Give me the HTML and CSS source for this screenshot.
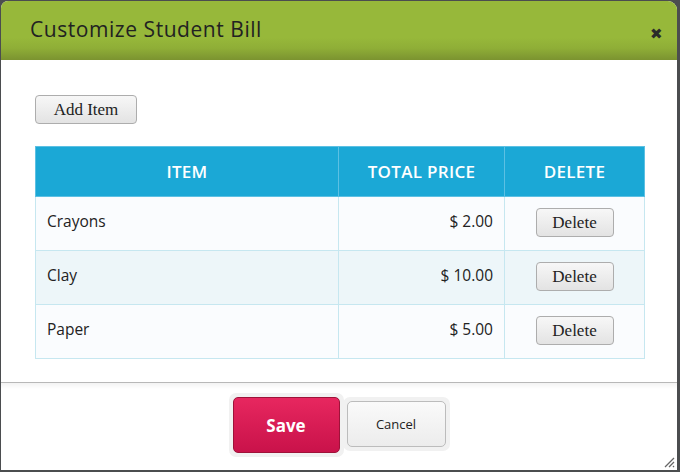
FILE: index.html
```html
<!DOCTYPE html>
<html>
<head>
<meta charset="utf-8">
<link rel="stylesheet" href="styles.css">
</head>
<body>
<div class="dialog">
  <div class="dlg-head">
    <h1 class="dlg-title">Customize Student Bill</h1>
    <span class="dlg-close">&#x2716;</span>
  </div>
  <div class="dlg-body">
    <button class="btn-legacy btn-add">Add Item</button>
    <table class="bill">
      <thead>
        <tr><th class="c-item">ITEM</th><th class="c-price">TOTAL PRICE</th><th class="c-del">DELETE</th></tr>
      </thead>
      <tbody>
        <tr class="odd"><td>Crayons</td><td class="num">$ 2.00</td><td class="del"><button class="btn-legacy btn-del">Delete</button></td></tr>
        <tr class="even"><td>Clay</td><td class="num">$ 10.00</td><td class="del"><button class="btn-legacy btn-del">Delete</button></td></tr>
        <tr class="odd"><td>Paper</td><td class="num">$ 5.00</td><td class="del"><button class="btn-legacy btn-del">Delete</button></td></tr>
      </tbody>
    </table>
  </div>
  <div class="dlg-foot">
    <span class="halo"><button class="btn-save">Save</button></span>
    <span class="halo"><button class="btn-cancel">Cancel</button></span>
  </div>
  <svg class="grip" width="12" height="12" viewBox="0 0 12 12"><path d="M11 2 L2 11 M11 6 L6 11 M11 10 L10 11" stroke="#666" stroke-width="1.3" fill="none"/></svg>
</div>
</body>
</html>
```

FILE: styles.css
```css
html, body { margin: 0; padding: 0; }
body {
  background: #4b4d4f;
  width: 680px;
  height: 472px;
  padding: 1px 0 0 1px;
  box-sizing: border-box;
  font-family: "Open Sans", "Liberation Sans", sans-serif;
}
.dialog {
  position: relative;
  width: 676px;
  height: 469px;
  background: #fff;
  border-radius: 7px 9px 0 0;
  overflow: hidden;
  display: flex;
  flex-direction: column;
}
.dlg-head {
  height: 59px;
  flex: none;
  background: linear-gradient(#97b83a 0, #97b83a 62%, #8fae37 80%, #7b9330 100%);
  display: flex;
  align-items: center;
  justify-content: space-between;
  padding: 0 14px 0 29px;
  box-sizing: border-box;
}
.dlg-title {
  margin: 0;
  font-size: 21px;
  font-weight: 500;
  color: #222;
  letter-spacing: 0.55px;
  position: relative;
  top: -2px;
}
.dlg-close {
  font-size: 15px;
  color: #2a2a2a;
  position: relative;
  top: 2px;
}
.dlg-body {
  flex: 1;
  padding: 35px 32px 0 34px;
  border-bottom: 1px solid #b8b8b8;
}
.btn-legacy {
  font-family: "Liberation Serif", "Times New Roman", serif;
  font-size: 17px;
  color: #222;
  background: linear-gradient(#f7f7f7, #e3e3e3);
  border: 1px solid #adadad;
  border-radius: 4px;
  padding: 0;
  cursor: pointer;
}
.btn-add {
  width: 102px;
  height: 29px;
  display: block;
}
.bill {
  margin-top: 22px;
  width: 610px;
  border-collapse: collapse;
  font-size: 15.5px;
  color: #222;
}
.bill th {
  background: #1ba8d6;
  color: #fff;
  font-weight: 600;
  font-size: 17px;
  letter-spacing: 0.3px;
  height: 50px;
  border: 1px solid #5cc0e3;
  text-align: center;
  padding: 0;
  box-sizing: border-box;
}
.bill th.c-item { width: 303px; }
.bill th.c-price { width: 166px; }
.bill td {
  border: 1px solid #c6e7f0;
  height: 54px;
  vertical-align: top;
  padding: 13px 11px 0 11px;
  box-sizing: border-box;
}
.bill tr.odd td { background: #fafcfe; }
.bill tr.even td { background: #edf6f9; }
.bill td.num { text-align: right; }
.bill td.del { text-align: center; padding-top: 11px; }
.btn-del {
  width: 78px;
  height: 29px;
}
.dlg-foot {
  height: 87px;
  flex: none;
  display: flex;
  justify-content: center;
  align-items: flex-start;
  padding-top: 10px;
  box-sizing: border-box;
  background: linear-gradient(#f3f3f3 0, #fff 6px);
}
.halo {
  display: inline-block;
  background: #f1f1f1;
  border-radius: 7px;
  padding: 4px;
}
.halo + .halo { margin-top: 4px; margin-left: -1px; }
.btn-save {
  display: block;
  width: 107px;
  height: 56px;
  background: linear-gradient(#e7275f, #c9124a);
  border: 1px solid #9e1239;
  border-radius: 5px;
  color: #fff;
  font-family: "Open Sans", "Liberation Sans", sans-serif;
  font-size: 17px;
  font-weight: 700;
}
.btn-cancel {
  display: block;
  width: 99px;
  height: 46px;
  background: linear-gradient(#fafafa, #ececec);
  border: 1px solid #bcbcbc;
  border-radius: 5px;
  color: #222;
  font-family: "Open Sans", "Liberation Sans", sans-serif;
  font-size: 13px;
}
.grip {
  position: absolute;
  right: 2px;
  bottom: 2px;
}
```
